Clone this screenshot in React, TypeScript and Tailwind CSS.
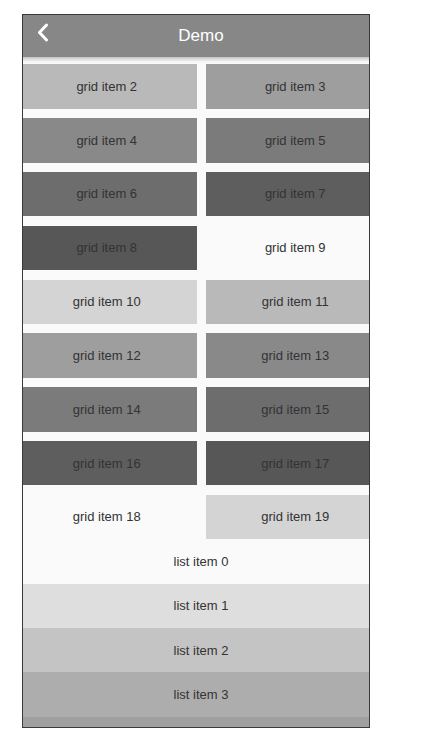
const gridShades = [
  'bg-[#fafafa]',
  'bg-[#d4d4d4]',
  'bg-[#b9b9b9]',
  'bg-[#9e9e9e]',
  'bg-[#898989]',
  'bg-[#7b7b7b]',
  'bg-[#6d6d6d]',
  'bg-[#5e5e5e]',
  'bg-[#575757]',
];

const listShades = ['bg-[#fafafa]', 'bg-[#dedede]', 'bg-[#c4c4c4]', 'bg-[#adadad]'];

const gridItems = Array.from({ length: 18 }, (_, i) => i + 2);

export default function App() {
  return (
    <main className="w-[437px] h-[746px] bg-white pt-[14px] pl-[22px] font-['Liberation_Sans',Arial,sans-serif]">
      <div className="w-[348px] h-[714px] border border-[#3a3a3a] overflow-hidden">
        <div className="w-[368px] -ml-[6px] h-full bg-[#fafafa]">
          <header className="relative z-10 h-[42px] bg-[#878787] flex items-center justify-center shadow-[0_2px_4px_rgba(0,0,0,0.25)]">
            <svg
              className="absolute left-[20px] top-[8px]"
              width="12"
              height="20"
              viewBox="0 0 12 20"
              fill="none"
            >
              <path d="M9.5 2 L2.5 9.5 L9.5 17" stroke="white" strokeWidth="3" strokeLinecap="round" strokeLinejoin="round" />
            </svg>
            <h1 className="text-white text-[17px] font-medium">Demo</h1>
          </header>

          <section className="grid grid-cols-2 gap-x-[9px] gap-y-[9.44px] pt-[7.3px]">
            {gridItems.map((n) => (
              <div
                key={n}
                className={`h-[44.4px] flex items-center justify-center text-[13px] text-[#333] ${gridShades[n % 9]}`}
              >
                grid item {n}
              </div>
            ))}
          </section>

          <section>
            {listShades.map((shade, i) => (
              <div
                key={i}
                className={`h-[44.4px] flex items-center justify-center text-[13px] text-[#333] ${shade}`}
              >
                list item {i}
              </div>
            ))}
            {/* next row peeks in at the bottom edge */}
            <div className="h-[44.4px] bg-[#a0a0a0]" />
          </section>
        </div>
      </div>
    </main>
  );
}
